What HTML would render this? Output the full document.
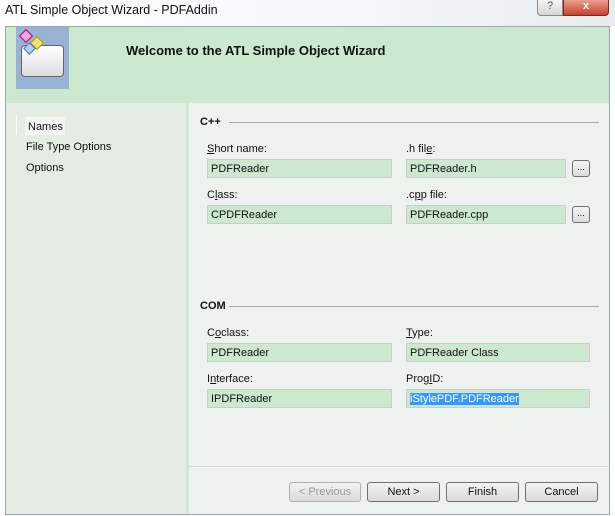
<!DOCTYPE html>
<html><head><style>
*{margin:0;padding:0;box-sizing:border-box}
body{width:615px;height:516px;background:#fff;font-family:"Liberation Sans",sans-serif;font-size:11px;color:#111;position:relative;overflow:hidden}
.a{position:absolute}
.title{left:5px;top:3px;font-size:12.5px;color:#111}
.win{left:5px;top:26px;width:605px;height:489px;background:#eef2ee;border:1px solid #9aa;}
.hdr{left:6px;top:27px;width:603px;height:76px;background:#cce8cf}
.icon{left:16px;top:27px;width:53px;height:62px;background:#98b2d4}
.left{left:6px;top:103px;width:180px;height:411px;background:#e4ece4}
.sep{left:186px;top:103px;width:3px;height:411px;background:#d2e6d4}
.inp{position:absolute;height:19px;background:#cce8cf;border:1px solid #c8cfc8;padding:3px 3px 0;font-size:11px}
.lbl{position:absolute;font-size:11px}
.grp{position:absolute;font-weight:bold;font-size:11px}
.line{position:absolute;height:1px;background:#a8aca8}
.dots{position:absolute;width:18px;height:17px;border:1px solid #707070;border-radius:3px;background:linear-gradient(#f4f4f4,#dcdcdc);font-size:9px;text-align:center;line-height:12px}
.btn{position:absolute;top:482px;width:73px;height:20px;border:1px solid #707070;border-radius:3px;background:linear-gradient(#f3f3f3,#dadada);text-align:center;line-height:18px;font-size:11px}
</style></head><body>
<div class="a" style="left:0;top:0;width:615px;height:26px;background:linear-gradient(90deg,#fff,#f4f6f8 60%,#e8ecef)"></div>
<div class="a title">ATL Simple Object Wizard - PDFAddin</div>
<div class="a" style="left:537px;top:0;width:26px;height:16px;border:1px solid #8a8a8a;border-top:none;border-radius:0 0 0 4px;background:linear-gradient(#f4f4f4,#d6d6d6);text-align:center;font-size:11px;color:#555">?</div>
<div class="a" style="left:563px;top:0;width:46px;height:16px;border:1px solid #7a2a20;border-top:none;border-radius:0 0 4px 0;background:linear-gradient(#e8a090,#c8402c);text-align:center;font-size:11px;color:#fff;font-weight:bold">x</div>
<div class="a win"></div>
<div class="a hdr"></div>
<div class="a icon"></div>
<div class="a" style="left:21px;top:45px;width:43px;height:32px;background:linear-gradient(#fff,#ddd);border:1px solid #666;border-radius:4px"></div>
<div class="a" style="left:21px;top:31px;width:10px;height:10px;background:#f0a8e0;border:1px solid #a07;transform:rotate(45deg)"></div>
<div class="a" style="left:32px;top:38px;width:10px;height:10px;background:#f0e070;border:1px solid #a90;transform:rotate(45deg)"></div>
<div class="a" style="left:25px;top:44px;width:9px;height:9px;background:#a8d0f0;border:1px solid #47a;transform:rotate(45deg)"></div>
<div class="a" style="left:126px;top:43px;font-weight:bold;font-size:13px">Welcome to the ATL Simple Object Wizard</div>
<div class="a left"></div>
<div class="a" style="left:16px;top:115px;width:1px;height:20px;background:#fff"></div>
<div class="a" style="left:25px;top:117px;width:40px;height:18px;background:#f3f6f3"></div>
<div class="a" style="left:28px;top:121px">Names</div>
<div class="a" style="left:26px;top:141px">File Type Options</div>
<div class="a" style="left:26px;top:162px">Options</div>
<div class="a sep"></div>

<div class="grp" style="left:200px;top:116px">C++</div>
<div class="line" style="left:229px;top:122px;width:370px"></div>
<div class="lbl" style="left:207px;top:143px"><u>S</u>hort name:</div>
<div class="inp" style="left:207px;top:159px;width:185px">PDFReader</div>
<div class="lbl" style="left:406px;top:143px">.h fil<u>e</u>:</div>
<div class="inp" style="left:406px;top:159px;width:160px">PDFReader.h</div>
<div class="dots" style="left:572px;top:160px">...</div>
<div class="lbl" style="left:207px;top:189px">C<u>l</u>ass:</div>
<div class="inp" style="left:207px;top:205px;width:185px">CPDFReader</div>
<div class="lbl" style="left:406px;top:189px">.c<u>p</u>p file:</div>
<div class="inp" style="left:406px;top:205px;width:160px">PDFReader.cpp</div>
<div class="dots" style="left:572px;top:206px">...</div>

<div class="grp" style="left:200px;top:300px">COM</div>
<div class="line" style="left:229px;top:306px;width:370px"></div>
<div class="lbl" style="left:207px;top:327px">C<u>o</u>class:</div>
<div class="inp" style="left:207px;top:343px;width:185px">PDFReader</div>
<div class="lbl" style="left:406px;top:327px"><u>T</u>ype:</div>
<div class="inp" style="left:406px;top:343px;width:184px">PDFReader Class</div>
<div class="lbl" style="left:207px;top:373px">I<u>n</u>terface:</div>
<div class="inp" style="left:207px;top:389px;width:185px">IPDFReader</div>
<div class="lbl" style="left:406px;top:373px">Prog<u>I</u>D:</div>
<div class="inp" style="left:406px;top:389px;width:184px"><span style="background:#3399ff;color:#fff">iStylePDF.PDFReader</span></div>

<div class="line" style="left:189px;top:466px;width:420px;background:#d0dcd0"></div>
<div class="btn" style="left:289px;width:72px;color:#999;border-color:#b0b0b0">&lt; Previous</div>
<div class="btn" style="left:367px">Next &gt;</div>
<div class="btn" style="left:446px">Finish</div>
<div class="btn" style="left:525px">Cancel</div>
</body></html>
